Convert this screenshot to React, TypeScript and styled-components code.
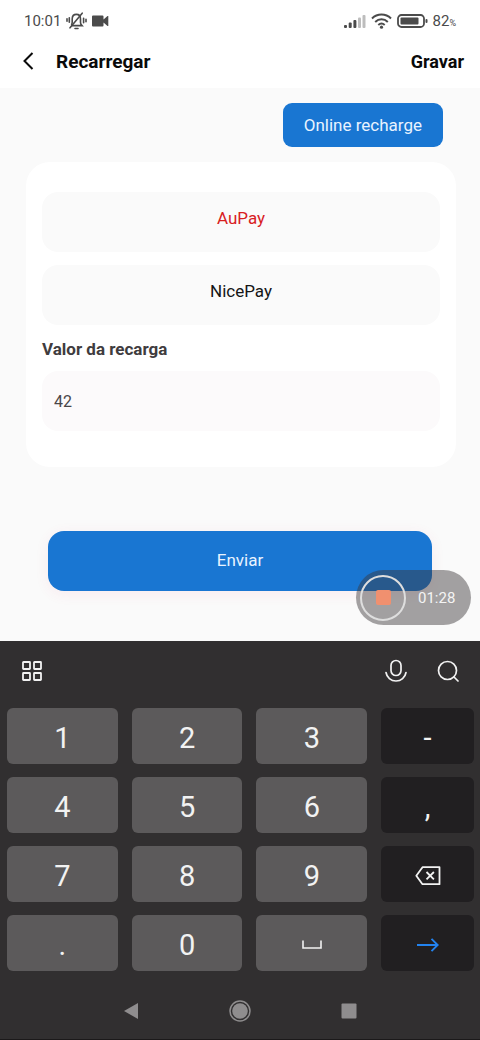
import React, { useState } from "react";
import styled, { createGlobalStyle } from "styled-components";

const GlobalStyle = createGlobalStyle`
  *, *::before, *::after { box-sizing: border-box; }
  body {
    margin: 0;
    background: #fafafa;
    font-family: Roboto, "Liberation Sans", sans-serif;
  }
  button, input { font-family: inherit; }
  button { border: 0; padding: 0; background: none; color: inherit; cursor: pointer; }
  svg { display: block; }
`;

const Screen = styled.div`
  display: flex;
  flex-direction: column;
  min-height: 100vh;
  background: #fafafa;
`;

const StatusBar = styled.div`
  display: flex;
  align-items: center;
  justify-content: space-between;
  height: 42px;
  padding: 0 24px;
  background: #fff;
  color: #4b4b4b;
  font-size: 15px;
`;

const StatusGroup = styled.div<{ $gap: number }>`
  display: flex;
  align-items: center;
  gap: ${({ $gap }) => $gap}px;
`;

const Percent = styled.span`
  small { font-size: 9px; }
`;

const Header = styled.header`
  display: flex;
  align-items: center;
  height: 46px;
  padding: 0 16px 8px;
  background: #fff;
  color: #0a0a0a;
`;

const BackButton = styled.button`
  display: grid;
  place-items: center;
  width: 24px;
  height: 24px;
`;

const Title = styled.h1`
  flex: 1;
  margin: 0;
  padding-left: 16px;
  font-size: 19px;
  font-weight: 700;
`;

const HeaderAction = styled.button`
  font-size: 18px;
  font-weight: 700;
`;

const Main = styled.main`
  position: relative;
  display: flex;
  flex: 1;
  flex-direction: column;
  padding: 15px 24px 50px 26px;
`;

const OnlineButton = styled.button`
  align-self: flex-end;
  height: 44px;
  margin-right: 13px;
  padding: 0 21px;
  border-radius: 9px;
  background: #1976d2;
  color: #e8f3ff;
  font-size: 17px;
`;

const Card = styled.form`
  display: flex;
  flex-direction: column;
  margin-top: 15px;
  padding: 30px 16px 36px;
  border-radius: 24px;
  background: #fff;
`;

const PayOption = styled.button<{ $selected: boolean }>`
  height: 60px;
  margin-bottom: 13px;
  padding-bottom: 8px;
  border-radius: 16px;
  background: #fafafa;
  color: ${({ $selected }) => ($selected ? "#d8201f" : "#151515")};
  font-size: 17px;
`;

const AmountLabel = styled.label`
  color: #3f3c3e;
  font-size: 17px;
  font-weight: 700;
  line-height: 22px;
`;

const AmountInput = styled.input`
  width: 100%;
  height: 60px;
  margin-top: 11px;
  padding: 0 12px;
  border: 0;
  border-radius: 16px;
  outline: 0;
  background: #fcfafb;
  color: #4a4648;
  font-size: 16px;
`;

const SubmitButton = styled.button`
  height: 60px;
  margin: 64px 24px 0 22px;
  padding-bottom: 2px;
  border-radius: 16px;
  background: #1976d2;
  box-shadow: 0 3px 14px rgba(230, 60, 110, 0.08);
  color: #e8f3ff;
  font-size: 17px;
`;

const Recorder = styled.div`
  position: absolute;
  right: 9px;
  bottom: 16px;
  display: flex;
  align-items: center;
  gap: 12px;
  width: 115px;
  height: 55px;
  padding-left: 4px;
  border-radius: 28px;
  background: rgba(58, 55, 56, 0.46);
  color: #f4f4f4;
  font-size: 15px;
`;

const StopButton = styled.button`
  display: grid;
  place-items: center;
  width: 46px;
  height: 46px;
  border: 2px solid #dedede;
  border-radius: 50%;

  &::before {
    content: "";
    width: 15px;
    height: 15px;
    border-radius: 2px;
    background: #f0906f;
  }
`;

const Keyboard = styled.section`
  background: #312f30;
  color: #f2f2f2;
`;

const Toolbar = styled.div`
  display: flex;
  align-items: center;
  gap: 28px;
  height: 67px;
  padding: 0 20px 8px;
`;

const ToolButton = styled.button<{ $first?: boolean }>`
  display: grid;
  place-items: center;
  width: 24px;
  height: 24px;
  margin-right: ${({ $first }) => ($first ? "auto" : "0")};
`;

const Keys = styled.div`
  display: grid;
  grid-template-columns: 111fr 111fr 111fr 93fr;
  gap: 13px 14px;
  padding: 0 6px 0 7px;
`;

const Key = styled.button<{ $dark?: boolean }>`
  display: grid;
  place-items: center;
  height: 56px;
  padding-top: 3px;
  border-radius: 6px;
  background: ${({ $dark }) => ($dark ? "#211f21" : "#5c5a5b")};
  font-size: 29px;
  line-height: 36px;
`;

const NavBar = styled.nav`
  display: flex;
  align-items: center;
  justify-content: center;
  gap: 85px;
  height: 70px;
  padding-top: 12px;
  border-bottom: 2px solid #1b191a;
  color: #8f8d8e;
`;

const NavButton = styled.button`
  display: grid;
  place-items: center;
  width: 24px;
  height: 24px;
`;

const MutedBellIcon = () => (
  <svg width="21" height="18" viewBox="0 0 21 18" fill="none" stroke="#4b4b4b" strokeWidth="1.6" strokeLinecap="round">
    <path d="M6 13.600h10c-1-1-1.500-2-1.500-3.200V7c0-2.700-1.600-4.600-4.100-4.600S6.200 4.300 6.200 7v3.200c0 .8-.2 1.500-.6 2.200" />
    <path d="M9 16.500h3M16.200 1.200 4 15.800M3.300 5.700v4.600M1 6.800v2.400M17.600 6.200v4.600M20 7.300v2.400" />
  </svg>
);

const CameraIcon = () => (
  <svg width="17" height="12" viewBox="0 0 17 12" fill="#4b4b4b">
    <path d="M1 .5h9.500a1 1 0 0 1 1 1v3L15.500 1h.8v10h-.8l-4-3.500v3a1 1 0 0 1-1 1H1a1 1 0 0 1-1-1v-9a1 1 0 0 1 1-1Z" />
  </svg>
);

const SignalIcon = () => (
  <svg width="22" height="14" viewBox="0 0 22 14" fill="#4b4b4b">
    <rect x="0" y="11" width="3" height="3" rx="1" />
    <rect x="4.700" y="8.500" width="3" height="5.500" rx="1" />
    <rect x="9.400" y="6" width="3" height="8" rx="1" />
    <rect x="14" y="3.500" width="3" height="10.500" rx="1" fill="#bdbdbd" />
    <rect x="18.500" y="1" width="3" height="13" rx="1" fill="#bdbdbd" />
  </svg>
);

const WifiIcon = () => (
  <svg width="21" height="16" viewBox="0 0 21 16" fill="none" stroke="#4b4b4b" strokeWidth="2">
    <path d="M1 5.500C6.300.3 14.700.3 20 5.500M4.200 8.900c3.600-3.400 9-3.400 12.600 0M7.300 12c1.900-1.700 4.500-1.700 6.400 0" />
    <circle cx="10.500" cy="14.200" r="1.600" fill="#4b4b4b" stroke="none" />
  </svg>
);

const BatteryIcon = () => (
  <svg width="31" height="14" viewBox="0 0 31 14" fill="none">
    <rect x="1" y="1" width="26" height="12" rx="3.500" stroke="#4b4b4b" strokeWidth="1.800" />
    <rect x="3.500" y="3.500" width="18" height="7" rx="1" fill="#4b4b4b" />
    <rect x="28.500" y="5" width="2" height="4" rx="1" fill="#4b4b4b" />
  </svg>
);

const BackIcon = () => (
  <svg width="12" height="18" viewBox="0 0 12 18" fill="none" stroke="#0a0a0a" strokeWidth="2">
    <path d="M10.500 1 2.500 9l8 8" />
  </svg>
);

const GridIcon = () => (
  <svg width="20" height="20" viewBox="0 0 20 20" fill="none" stroke="#f2f2f2" strokeWidth="1.800">
    <rect x="1" y="1" width="7" height="7" rx="0.500" />
    <rect x="12" y="1" width="7" height="7" rx="0.500" />
    <rect x="1" y="12" width="7" height="7" rx="0.500" />
    <rect x="12" y="12" width="7" height="7" rx="0.500" />
  </svg>
);

const MicIcon = () => (
  <svg width="22" height="24" viewBox="0 0 22 24" fill="none" stroke="#f2f2f2" strokeWidth="1.700" strokeLinecap="round">
    <rect x="6" y="1.500" width="10" height="15" rx="5" />
    <path d="M1 13.500c.8 5 5 8.500 10 8.500s9.200-3.500 10-8.500" />
  </svg>
);

const SearchIcon = () => (
  <svg width="22" height="22" viewBox="0 0 22 22" fill="none" stroke="#f2f2f2" strokeWidth="1.700" strokeLinecap="round">
    <circle cx="10.500" cy="10.500" r="9" />
    <path d="m17 17 4 4" />
  </svg>
);

const BackspaceIcon = () => (
  <svg width="26" height="20" viewBox="0 0 26 20" fill="none" stroke="#f2f2f2" strokeWidth="1.800">
    <path d="M7.500 1.200h17v17h-17L1.300 9.700Z" strokeLinejoin="round" />
    <path d="m11.500 6 7.400 7.400M18.900 6l-7.400 7.400" />
  </svg>
);

const SpaceIcon = () => (
  <svg width="20" height="9" viewBox="0 0 20 9" fill="none" stroke="#f2f2f2" strokeWidth="1.600">
    <path d="M1 .5V8h18V.5" />
  </svg>
);

const EnterIcon = () => (
  <svg width="22" height="14" viewBox="0 0 22 14" fill="none" stroke="#2383f0" strokeWidth="1.900">
    <path d="M0 7h20.500M14.500.8 20.700 7l-6.200 6.200" />
  </svg>
);

type KeyDef = { id: string; label?: string; icon?: React.ReactNode; dark?: boolean };

const keys: KeyDef[] = [
  { id: "1" }, { id: "2" }, { id: "3" }, { id: "-", dark: true },
  { id: "4" }, { id: "5" }, { id: "6" }, { id: ",", dark: true },
  { id: "7" }, { id: "8" }, { id: "9" },
  { id: "delete", label: "Apagar", icon: <BackspaceIcon />, dark: true },
  { id: "." }, { id: "0" },
  { id: "space", label: "Espaço", icon: <SpaceIcon /> },
  { id: "enter", label: "Enter", icon: <EnterIcon />, dark: true },
];

const providers = ["AuPay", "NicePay"];

export default function App() {
  const [provider, setProvider] = useState("AuPay");
  const [amount, setAmount] = useState("42");

  const press = (id: string) => {
    if (id === "delete") setAmount((value) => value.slice(0, -1));
    else if (id === "space") setAmount((value) => value + " ");
    else if (id !== "enter") setAmount((value) => value + id);
  };

  return (
    <>
      <GlobalStyle />
      <Screen>
        <StatusBar>
          <StatusGroup $gap={5}>
            <span>10:01</span>
            <MutedBellIcon />
            <CameraIcon />
          </StatusGroup>
          <StatusGroup $gap={5}>
            <SignalIcon />
            <WifiIcon />
            <BatteryIcon />
            <Percent>82<small>%</small></Percent>
          </StatusGroup>
        </StatusBar>
        <Header>
          <BackButton aria-label="Voltar"><BackIcon /></BackButton>
          <Title>Recarregar</Title>
          <HeaderAction>Gravar</HeaderAction>
        </Header>
        <Main>
          <OnlineButton>Online recharge</OnlineButton>
          <Card id="recharge" onSubmit={(event) => event.preventDefault()}>
            {providers.map((name) => (
              <PayOption
                key={name}
                type="button"
                $selected={name === provider}
                aria-pressed={name === provider}
                onClick={() => setProvider(name)}
              >
                {name}
              </PayOption>
            ))}
            <AmountLabel htmlFor="amount">Valor da recarga</AmountLabel>
            <AmountInput
              id="amount"
              inputMode="decimal"
              value={amount}
              onChange={(event) => setAmount(event.target.value)}
            />
          </Card>
          <SubmitButton type="submit" form="recharge">Enviar</SubmitButton>
          <Recorder>
            <StopButton aria-label="Parar gravação" />
            <span>01:28</span>
          </Recorder>
        </Main>
        <Keyboard>
          <Toolbar>
            <ToolButton $first aria-label="Menu"><GridIcon /></ToolButton>
            <ToolButton aria-label="Microfone"><MicIcon /></ToolButton>
            <ToolButton aria-label="Pesquisar"><SearchIcon /></ToolButton>
          </Toolbar>
          <Keys>
            {keys.map(({ id, label, icon, dark }) => (
              <Key key={id} type="button" $dark={dark} aria-label={label} onClick={() => press(id)}>
                {icon ?? id}
              </Key>
            ))}
          </Keys>
          <NavBar>
            <NavButton aria-label="Voltar">
              <svg width="16" height="18" viewBox="0 0 16 18" fill="currentColor"><path d="M15 1v16L1 9Z" /></svg>
            </NavButton>
            <NavButton aria-label="Início">
              <svg width="22" height="22" viewBox="0 0 22 22" fill="currentColor">
                <circle cx="11" cy="11" r="10" fill="none" stroke="currentColor" strokeWidth="1.500" />
                <circle cx="11" cy="11" r="7.800" />
              </svg>
            </NavButton>
            <NavButton aria-label="Recentes">
              <svg width="16" height="16" viewBox="0 0 16 16" fill="currentColor"><rect x="0.500" y="0.500" width="15" height="15" rx="1" /></svg>
            </NavButton>
          </NavBar>
        </Keyboard>
      </Screen>
    </>
  );
}
